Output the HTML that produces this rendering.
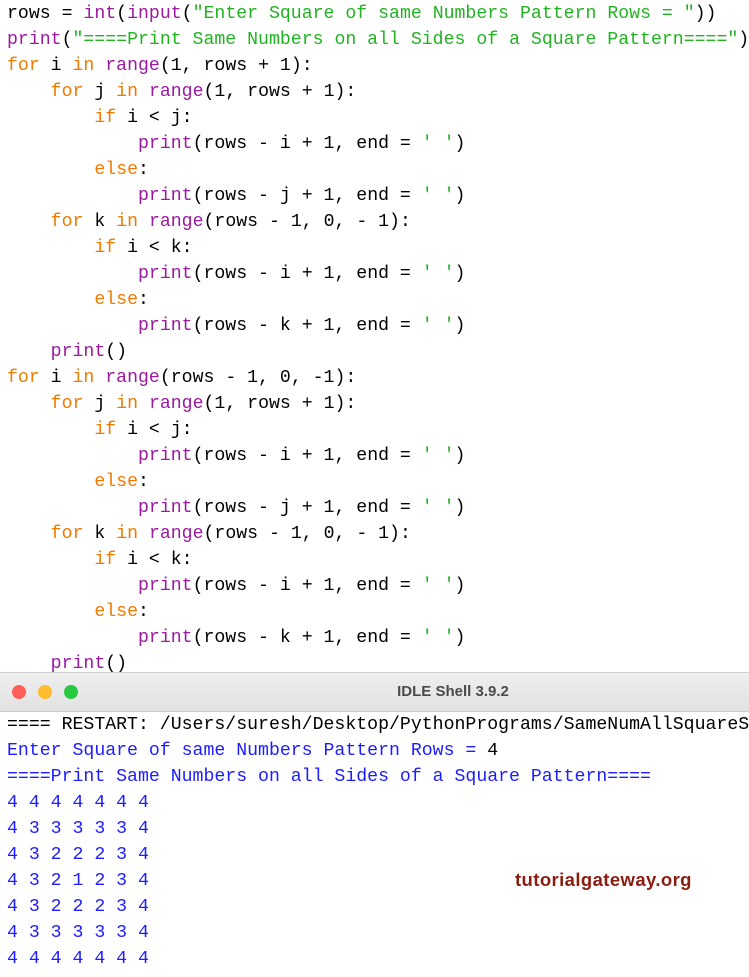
<!DOCTYPE html>
<html><head><style>
body{margin:0;width:749px;height:977px;overflow:hidden;background:#fff;position:relative}
pre{margin:0;font-family:"Liberation Mono",monospace;font-size:18.2px;line-height:26px;white-space:pre;position:absolute;left:7px}
.k{color:#ee7a00}.b{color:#9a1aa0}.s{color:#22b322}.o{color:#1d1dff}
#code{top:1px;color:#000}
#bar{position:absolute;left:0;top:672px;width:749px;height:38px;background:linear-gradient(#eeeeee,#e2e2e2);border-top:1px solid #d0d0d0;border-bottom:1px solid #c8c8c8}
.d{position:absolute;top:12px;width:14px;height:14px;border-radius:50%}
#t{position:absolute;left:0;width:906px;text-align:center;top:10px;font:bold 15px "Liberation Sans",sans-serif;color:#4a4a4a}
#sh{top:712px;color:#000}
#wm{position:absolute;left:515px;top:869px;font:bold 18.5px "Liberation Sans",sans-serif;color:#8b1c10;letter-spacing:0.4px}
</style></head><body>
<pre id="code">rows = <span class="b">int</span>(<span class="b">input</span>(<span class="s">"Enter Square of same Numbers Pattern Rows = "</span>))
<span class="b">print</span>(<span class="s">"====Print Same Numbers on all Sides of a Square Pattern===="</span>)
<span class="k">for</span> i <span class="k">in</span> <span class="b">range</span>(1, rows + 1):
    <span class="k">for</span> j <span class="k">in</span> <span class="b">range</span>(1, rows + 1):
        <span class="k">if</span> i &lt; j:
            <span class="b">print</span>(rows - i + 1, end = <span class="s">' '</span>)
        <span class="k">else</span>:
            <span class="b">print</span>(rows - j + 1, end = <span class="s">' '</span>)
    <span class="k">for</span> k <span class="k">in</span> <span class="b">range</span>(rows - 1, 0, - 1):
        <span class="k">if</span> i &lt; k:
            <span class="b">print</span>(rows - i + 1, end = <span class="s">' '</span>)
        <span class="k">else</span>:
            <span class="b">print</span>(rows - k + 1, end = <span class="s">' '</span>)
    <span class="b">print</span>()
<span class="k">for</span> i <span class="k">in</span> <span class="b">range</span>(rows - 1, 0, -1):
    <span class="k">for</span> j <span class="k">in</span> <span class="b">range</span>(1, rows + 1):
        <span class="k">if</span> i &lt; j:
            <span class="b">print</span>(rows - i + 1, end = <span class="s">' '</span>)
        <span class="k">else</span>:
            <span class="b">print</span>(rows - j + 1, end = <span class="s">' '</span>)
    <span class="k">for</span> k <span class="k">in</span> <span class="b">range</span>(rows - 1, 0, - 1):
        <span class="k">if</span> i &lt; k:
            <span class="b">print</span>(rows - i + 1, end = <span class="s">' '</span>)
        <span class="k">else</span>:
            <span class="b">print</span>(rows - k + 1, end = <span class="s">' '</span>)
    <span class="b">print</span>()</pre>
<div id="bar"><div class="d" style="left:12px;background:#fe5f57"></div><div class="d" style="left:38px;background:#febc2e"></div><div class="d" style="left:64px;background:#28c840"></div><div id="t">IDLE Shell 3.9.2</div></div>
<pre id="sh">==== RESTART: /Users/suresh/Desktop/PythonPrograms/SameNumAllSquareS
<span class="o">Enter Square of same Numbers Pattern Rows = </span>4
<span class="o">====Print Same Numbers on all Sides of a Square Pattern====
4 4 4 4 4 4 4
4 3 3 3 3 3 4
4 3 2 2 2 3 4
4 3 2 1 2 3 4
4 3 2 2 2 3 4
4 3 3 3 3 3 4
4 4 4 4 4 4 4</span></pre>
<div id="wm">tutorialgateway.org</div>
</body></html>
